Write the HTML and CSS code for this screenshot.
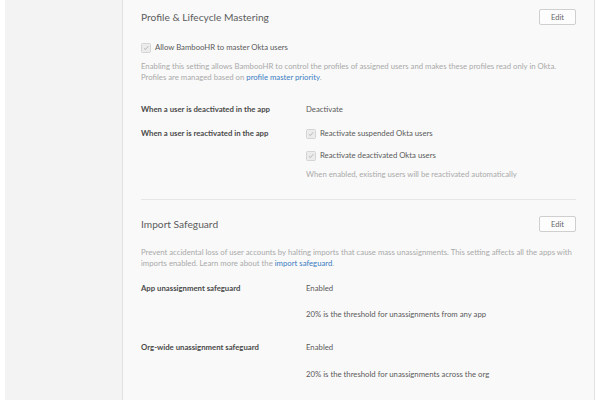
FILE: index.html
```html
<!DOCTYPE html>
<html>
<head>
<meta charset="utf-8">
<link rel="stylesheet" href="styles.css">
</head>
<body>
<div class="page">
  <div class="edge"></div>
  <aside class="side"></aside>
  <main class="card">
    <section class="section">
      <div class="head">
        <h2 class="title">Profile &amp; Lifecycle Mastering</h2>
        <button class="btn">Edit</button>
      </div>
      <label class="check main-check"><span class="box"><svg viewBox="0 0 10 10"><path d="M2.4 5.2 L4.2 7 L7.8 2.8" /></svg></span>Allow BambooHR to master Okta users</label>
      <p class="desc">Enabling this setting allows BambooHR to control the profiles of assigned users and makes these profiles read only in Okta. Profiles are managed based on <a class="link">profile master priority</a>.</p>
      <div class="row r1">
        <div class="label">When a user is deactivated in the app</div>
        <div class="value">Deactivate</div>
      </div>
      <div class="row r2">
        <div class="label">When a user is reactivated in the app</div>
        <div class="value">
          <label class="check"><span class="box"><svg viewBox="0 0 10 10"><path d="M2.4 5.2 L4.2 7 L7.8 2.8" /></svg></span>Reactivate suspended Okta users</label>
          <label class="check c2"><span class="box"><svg viewBox="0 0 10 10"><path d="M2.4 5.2 L4.2 7 L7.8 2.8" /></svg></span>Reactivate deactivated Okta users</label>
          <div class="hint">When enabled, existing users will be reactivated automatically</div>
        </div>
      </div>
    </section>
    <hr class="divider">
    <section class="section">
      <div class="head">
        <h2 class="title">Import Safeguard</h2>
        <button class="btn">Edit</button>
      </div>
      <p class="desc d2">Prevent accidental loss of user accounts by halting imports that cause mass unassignments. This setting affects all the apps with imports enabled. Learn more about the <a class="link">import safeguard</a>.</p>
      <div class="row r3">
        <div class="label">App unassignment safeguard</div>
        <div class="value">
          <div>Enabled</div>
          <div class="sub">20% is the threshold for unassignments from any app</div>
        </div>
      </div>
      <div class="row r4">
        <div class="label">Org-wide unassignment safeguard</div>
        <div class="value">
          <div>Enabled</div>
          <div class="sub">20% is the threshold for unassignments across the org</div>
        </div>
      </div>
    </section>
  </main>
  <div class="edge"></div>
</div>
</body>
</html>
```

FILE: styles.css
```css
* { box-sizing: border-box; }
html, body { margin: 0; padding: 0; background: #ffffff; }
body {
  font-family: Lato, "Liberation Sans", Arial, sans-serif;
  font-size: 7.75px;
  color: #5a5a5a;
  width: 600px;
  height: 400px;
  overflow: hidden;
}
.page {
  display: flex;
  height: 400px;
}
.edge { width: 5px; flex: none; background: #ffffff; }
.side {
  width: 118px;
  flex: none;
  background: #f3f3f3;
  border-right: 1px solid #e2e2e2;
}
.card {
  flex: 1;
  background: #f9f9f9;
  border-right: 1px solid #e2e2e2;
  padding: 9px 18px 0 18px;
}
.head {
  display: flex;
  justify-content: space-between;
  align-items: center;
  height: 16px;
}
.title {
  margin: 0;
  font-size: 10.2px;
  font-weight: normal;
  color: #5c5c5c;
}
.btn {
  width: 37px;
  height: 16px;
  padding: 0;
  border: 1px solid #cfcfcf;
  border-radius: 2px;
  background: #fdfdfd;
  font-family: inherit;
  font-size: 7.5px;
  color: #666;
}
.check {
  display: flex;
  align-items: center;
  line-height: 11px;
  color: #5a5a5a;
}
.box {
  width: 10px;
  height: 10px;
  border: 1px solid #d4d4d4;
  border-radius: 1.5px;
  background: #ececec;
  margin-right: 4px;
  display: flex;
}
.box svg { width: 8px; height: 8px; }
.box path { fill: none; stroke: #a8a8a8; stroke-width: 1; }
.main-check { margin-top: 17px; }
.desc {
  margin: 8px 0 0;
  line-height: 10.5px;
  color: #a9a9a9;
}
.link { color: #3a7cc1; }
.row {
  display: grid;
  grid-template-columns: 165px 1fr;
  line-height: 11px;
}
.label { font-weight: bold; color: #4a4a4a; }
.r1 { margin-top: 22px; }
.r2 { margin-top: 13px; }
.c2 { margin-top: 11px; }
.hint { margin-top: 8px; color: #a9a9a9; }
.divider {
  border: 0;
  border-top: 1px solid #e6e6e6;
  margin: 19px 0 16px;
}
.d2 { margin-top: 15px; line-height: 11px; }
.r3 { margin-top: 14px; }
.r4 { margin-top: 22px; }
.sub { margin-top: 15px; }
.r4 .sub { margin-top: 16px; }
```
